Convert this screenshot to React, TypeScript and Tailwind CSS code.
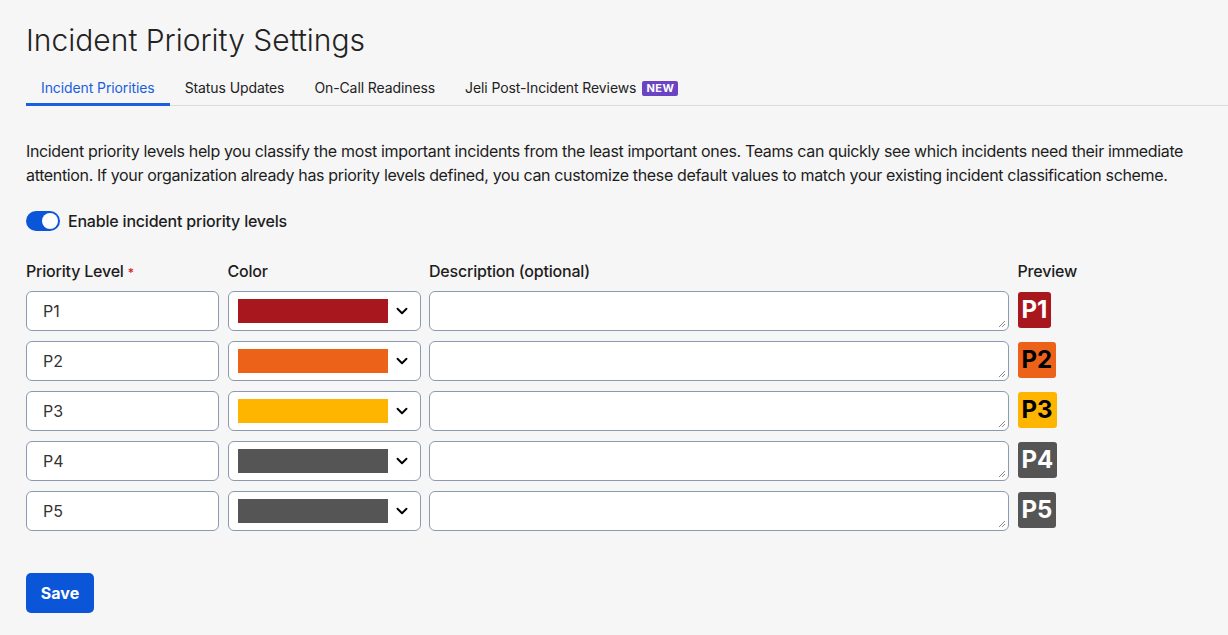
import { ChevronDown } from 'lucide-react';

const levels = [
  { name: 'P1', color: '#a8161e', text: 'text-white' },
  { name: 'P2', color: '#ec6219', text: 'text-black' },
  { name: 'P3', color: '#fdb500', text: 'text-black' },
  { name: 'P4', color: '#555555', text: 'text-white' },
  { name: 'P5', color: '#555555', text: 'text-white' },
];

const tabs = ['Incident Priorities', 'Status Updates', 'On-Call Readiness', 'Jeli Post-Incident Reviews'];

export default function App() {
  return (
    <div className="min-h-[635px] bg-[#f6f6f6] pl-[26px] pt-[21px] font-['Inter',sans-serif] text-[#1d1d1d]">
      <h1 className="text-[30px] leading-[38px] font-light text-[#222]">Incident Priority Settings</h1>

      {/* Tabs */}
      <div className="mt-[13px] flex border-b border-[#dcdcdc]">
        {tabs.map((t, i) => (
          <div
            key={t}
            className={
              '-mb-[1px] flex items-center gap-[6px] border-b-[3px] px-[15px] pb-[5px] pt-[6px] text-[14px] leading-[20px] tracking-[-0.1px] ' +
              (i === 0 ? 'border-[#1a5fe0] text-[#1a5fe0]' : 'border-transparent text-[#222]')
            }
          >
            {t}
            {i === 3 && (
              <span className="rounded-[2px] bg-[#6b44c4] px-[4px] text-[11px] font-bold leading-[15px] tracking-[0.5px] text-white">NEW</span>
            )}
          </div>
        ))}
      </div>

      <p className="mt-[33px] text-[16px] leading-[24px] tracking-[-0.35px] text-[#1d1d1d]">
        Incident priority levels help you classify the most important incidents from the least important ones. Teams can quickly see which incidents need their immediate attention. If your organization already has priority levels defined, you can customize these default values to match your existing incident classification scheme.
      </p>

      {/* Toggle */}
      <div className="mt-[22px] flex items-center gap-[8px]">
        <div className="flex h-[20px] w-[34px] items-center justify-end rounded-full bg-[#0b55d8] px-[2px]">
          <div className="h-[16px] w-[16px] rounded-full bg-white" />
        </div>
        <span className="text-[16px] font-medium leading-[24px] tracking-[-0.2px]">Enable incident priority levels</span>
      </div>

      {/* Table */}
      <div className="mt-[29px] grid grid-cols-[193px_193px_580px_auto] gap-x-[8.5px] gap-y-[10px]">
        <div className="-mb-[1px] text-[16px] font-medium leading-[18px] tracking-[-0.2px]">
          Priority Level <span className="text-[12px] text-[#d42020]">*</span>
        </div>
        <div className="-mb-[1px] text-[16px] font-medium leading-[18px] tracking-[-0.2px]">Color</div>
        <div className="-mb-[1px] text-[16px] font-medium leading-[18px] tracking-[-0.2px]">Description (optional)</div>
        <div className="-mb-[1px] text-[16px] font-medium leading-[18px] tracking-[-0.2px]">Preview</div>

        {levels.map((l) => (
          <>
            <div key={l.name + 'a'} className="flex h-[40px] items-center rounded-[6px] border border-[#8b9ab0] bg-white px-[16px] text-[16px] text-[#333]">
              {l.name}
            </div>
            <div key={l.name + 'b'} className="flex h-[40px] items-center justify-between rounded-[6px] border border-[#8b9ab0] bg-white pl-[9px] pr-[9px]">
              <div className="h-[24px] w-[150px]" style={{ background: l.color }} />
              <ChevronDown size={18} strokeWidth={2.5} className="text-black" />
            </div>
            <div key={l.name + 'c'} className="relative h-[40px] rounded-[6px] border border-[#8b9ab0] bg-white">
              <svg className="absolute bottom-[2px] right-[2px]" width="8" height="8" viewBox="0 0 8 8">
                <path d="M7 1 L1 7 M7 4 L4 7" stroke="#888" strokeWidth="1" />
              </svg>
            </div>
            <div key={l.name + 'd'} className="flex items-start pt-[1px]">
              <span
                className={'rounded-[3px] px-[4px] text-[24px] font-bold leading-[36px] ' + l.text}
                style={{ background: l.color }}
              >
                {l.name}
              </span>
            </div>
          </>
        ))}
      </div>

      <button className="mt-[42px] h-[40px] w-[68px] rounded-[5px] bg-[#0b55d8] text-[16px] font-bold text-white">Save</button>
    </div>
  );
}
